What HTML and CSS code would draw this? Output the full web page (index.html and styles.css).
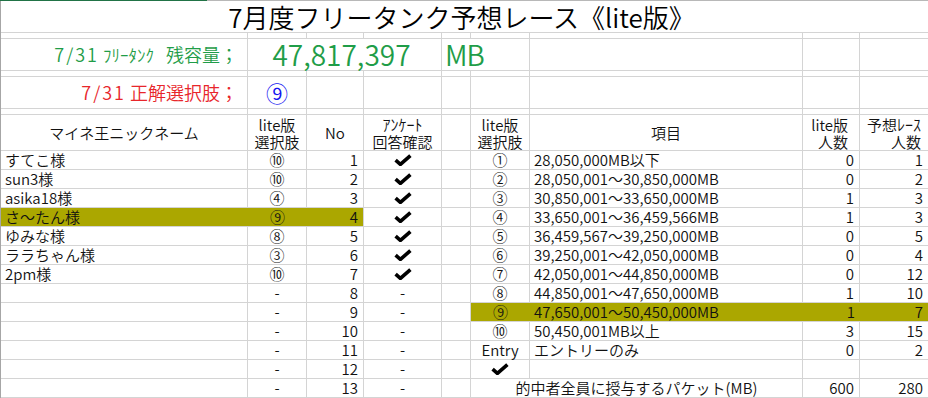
FILE: index.html
```html
<!DOCTYPE html>
<html lang="ja">
<head>
<meta charset="utf-8">
<title>7月度フリータンク予想レース《lite版》</title>
<link rel="stylesheet" href="styles.css">
</head>
<body>
<div class="sheet">
  <div class="title">7月度フリータンク予想レース《lite版》</div>

  <div></div><div></div><div></div><div></div><div></div><div></div><div></div><div></div><div></div>

  <div class="label green"><span class="dt">7/31</span> <span class="hw">ﾌﾘｰﾀﾝｸ</span>残容量；</div>
  <div class="big green span3">47,817,397</div>
  <div class="big green mb span2">MB</div>
  <div></div><div></div><div></div>

  <div></div><div></div><div></div><div></div><div></div><div></div><div></div><div></div><div></div>

  <div class="label red"><span class="dt">7/31</span> 正解選択肢；</div>
  <div class="circ blue">⑨</div>
  <div></div><div></div><div></div><div></div><div></div><div></div><div></div>

  <div></div><div></div><div></div><div></div><div></div><div></div><div></div><div></div><div></div>

  <div class="hd"><div>マイネ王ニックネーム</div></div>
  <div class="hd"><div>lite版<br>選択肢</div></div>
  <div class="hd"><div>No</div></div>
  <div class="hd"><div><span class="hw">ｱﾝｹｰﾄ</span><br>回答確認</div></div>
  <div></div>
  <div class="hd"><div>lite版<br>選択肢</div></div>
  <div class="hd"><div>項目</div></div>
  <div class="hd rt"><div>lite版<br>人数</div></div>
  <div class="hd rt2"><div>予想<span class="hw">ﾚｰｽ</span><br>人数</div></div>

  <!-- row 1 -->
  <div class="l">すてこ様</div><div class="c">⑩</div><div class="r">1</div><div class="c"><svg class="ck" viewBox="0 0 18 12"><path d="M1.6 6.2 L6.4 10.4 L16.4 1.6"/></svg></div><div></div>
  <div class="c">①</div><div class="l">28,050,000MB以下</div><div class="r">0</div><div class="r">1</div>
  <!-- row 2 -->
  <div class="l">sun3様</div><div class="c">⑩</div><div class="r">2</div><div class="c"><svg class="ck" viewBox="0 0 18 12"><path d="M1.6 6.2 L6.4 10.4 L16.4 1.6"/></svg></div><div></div>
  <div class="c">②</div><div class="l">28,050,001～30,850,000MB</div><div class="r">0</div><div class="r">2</div>
  <!-- row 3 -->
  <div class="l">asika18様</div><div class="c">④</div><div class="r">3</div><div class="c"><svg class="ck" viewBox="0 0 18 12"><path d="M1.6 6.2 L6.4 10.4 L16.4 1.6"/></svg></div><div></div>
  <div class="c">③</div><div class="l">30,850,001～33,650,000MB</div><div class="r">1</div><div class="r">3</div>
  <!-- row 4 -->
  <div class="hl hl-left"><div class="l">さ～たん様</div><div class="c">⑨</div><div class="r">4</div></div><div class="c"><svg class="ck" viewBox="0 0 18 12"><path d="M1.6 6.2 L6.4 10.4 L16.4 1.6"/></svg></div><div></div>
  <div class="c">④</div><div class="l">33,650,001～36,459,566MB</div><div class="r">1</div><div class="r">3</div>
  <!-- row 5 -->
  <div class="l">ゆみな様</div><div class="c">⑧</div><div class="r">5</div><div class="c"><svg class="ck" viewBox="0 0 18 12"><path d="M1.6 6.2 L6.4 10.4 L16.4 1.6"/></svg></div><div></div>
  <div class="c">⑤</div><div class="l">36,459,567～39,250,000MB</div><div class="r">0</div><div class="r">5</div>
  <!-- row 6 -->
  <div class="l">ララちゃん様</div><div class="c">③</div><div class="r">6</div><div class="c"><svg class="ck" viewBox="0 0 18 12"><path d="M1.6 6.2 L6.4 10.4 L16.4 1.6"/></svg></div><div></div>
  <div class="c">⑥</div><div class="l">39,250,001～42,050,000MB</div><div class="r">0</div><div class="r">4</div>
  <!-- row 7 -->
  <div class="l">2pm様</div><div class="c">⑩</div><div class="r">7</div><div class="c"><svg class="ck" viewBox="0 0 18 12"><path d="M1.6 6.2 L6.4 10.4 L16.4 1.6"/></svg></div><div></div>
  <div class="c">⑦</div><div class="l">42,050,001～44,850,000MB</div><div class="r">0</div><div class="r">12</div>
  <!-- row 8 -->
  <div></div><div class="c">-</div><div class="r">8</div><div class="c">-</div><div></div>
  <div class="c">⑧</div><div class="l">44,850,001～47,650,000MB</div><div class="r">1</div><div class="r">10</div>
  <!-- row 9 -->
  <div></div><div class="c">-</div><div class="r">9</div><div class="c">-</div><div></div>
  <div class="hl hl-right"><div class="c">⑨</div><div class="l">47,650,001～50,450,000MB</div><div class="r">1</div><div class="r">7</div></div>
  <!-- row 10 -->
  <div></div><div class="c">-</div><div class="r">10</div><div class="c">-</div><div></div>
  <div class="c">⑩</div><div class="l">50,450,001MB以上</div><div class="r">3</div><div class="r">15</div>
  <!-- row 11 -->
  <div></div><div class="c">-</div><div class="r">11</div><div class="c">-</div><div></div>
  <div class="c">Entry</div><div class="l">エントリーのみ</div><div class="r">0</div><div class="r">2</div>
  <!-- row 12 -->
  <div></div><div class="c">-</div><div class="r">12</div><div class="c">-</div><div></div>
  <div class="c"><svg class="ck" viewBox="0 0 18 12"><path d="M1.6 6.2 L6.4 10.4 L16.4 1.6"/></svg></div><div></div><div></div><div></div>
  <!-- row 13 -->
  <div></div><div class="c">-</div><div class="r">13</div><div class="c">-</div><div></div>
  <div class="c span2">的中者全員に授与するパケット(MB)</div><div class="r">600</div><div class="r">280</div>
</div>
</body>
</html>
```

FILE: styles.css
```css
html, body {
  margin: 0;
  padding: 0;
  background: #fff;
}

body {
  width: 928px;
  height: 398px;
  overflow: hidden;
  font-family: "Noto Sans CJK JP", "Noto Sans", sans-serif;
  font-weight: 350;
  color: #111;
}

.sheet {
  display: grid;
  grid-template-columns: 246px 58px 56px 77px 28px 58px 272px 56px 68px;
  grid-template-rows: 31px 5px 31px 5px 31px 5px 35px repeat(13, 18px);
  gap: 1px;
  padding: 1px 0 1px 1px;
  width: 928px;
  box-sizing: border-box;
  background:
    linear-gradient(to right, #217346 0 207px, #b8b8b8 207px) top left / 100% 1px no-repeat,
    linear-gradient(#a6a6a6, #a6a6a6) top left / 1px 100% no-repeat,
    #d4d4d4;
}

.sheet > div {
  background: #fff;
  font-size: 15px;
  line-height: 18px;
  white-space: nowrap;
}

.title {
  grid-column: 1 / -1;
  font-size: 26px !important;
  line-height: 31px !important;
  text-align: center;
  padding-right: 6px;
  color: #000;
}

.span2 { grid-column: span 2; }
.span3 { grid-column: span 3; }

.label {
  font-size: 18px !important;
  line-height: 31px !important;
  text-align: right;
  padding-right: 9px;
}

.label .dt {
  letter-spacing: 2px;
}

.label .hw {
  font-size: 17px;
  margin-right: 12px;
}

.green { color: #1f9d48; }
.red { color: #e8262b; }
.blue { color: #1414f0; }

.big {
  font-size: 28px !important;
  line-height: 31px !important;
  text-align: center;
  padding-right: 6px;
}

.big.mb {
  text-align: left;
  padding: 0 0 0 3px;
  letter-spacing: -1px;
}

.circ {
  font-size: 22px !important;
  line-height: 31px !important;
  text-align: center;
}

.hd {
  display: flex;
  align-items: center;
  justify-content: center;
  text-align: center;
}

.hd > div {
  line-height: 17px;
}

.hd.rt {
  justify-content: flex-end;
  text-align: right;
  padding-right: 11px;
}

.hd.rt2 {
  justify-content: flex-end;
  text-align: right;
  padding-right: 7px;
}

.hd .hw {
  font-size: 16px;
}

.l { padding-left: 4px; text-align: left; }
.c { text-align: center; }
.r { padding-right: 5px; text-align: right; }

.hl {
  display: grid;
  background: #aba700 !important;
}

.hl > div {
  font-size: 15px;
  line-height: 18px;
  white-space: nowrap;
}

.hl-left {
  grid-column: span 3;
  grid-template-columns: 247px 59px 56px;
}

.hl-right {
  grid-column: span 4;
  grid-template-columns: 59px 273px 57px 68px;
}

.ck {
  display: block;
  width: 18px;
  height: 12px;
  margin: 3px auto 0;
}

.ck path {
  fill: none;
  stroke: #000;
  stroke-width: 3.6;
  stroke-linejoin: miter;
  stroke-linecap: butt;
}
```
